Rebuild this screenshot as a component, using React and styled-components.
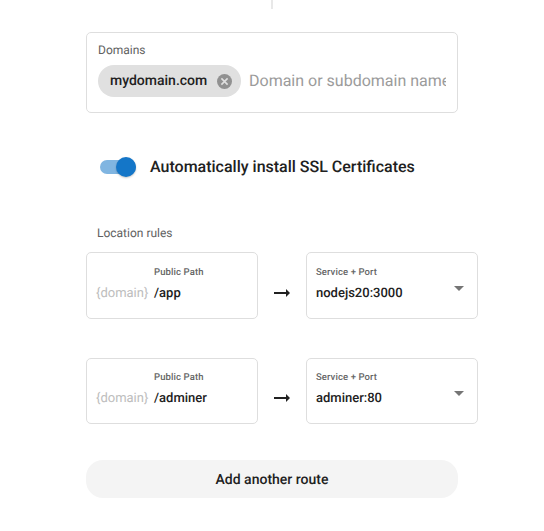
import React from "react";
import styled, { createGlobalStyle } from "styled-components";

const GlobalStyle = createGlobalStyle`
  * { box-sizing: border-box; }
  body {
    margin: 0;
    background: #fff;
    color: #212121;
    font-family: Roboto, "Liberation Sans", sans-serif;
    text-rendering: geometricPrecision;
  }
`;

const Page = styled.main`
  width: 544px;
  height: 531px;
  padding-left: 86px;
  overflow: hidden;
  display: flex;
  flex-direction: column;
  align-items: flex-start;
`;

const Connector = styled.div`
  width: 2px;
  height: 9px;
  margin: 0 0 23px 185px;
  background: #e8e8e8;
`;

const Outlined = styled.section`
  border: 1px solid #dedede;
  border-radius: 5px;
  background: #fff;
`;

const DomainsField = styled(Outlined)`
  width: 372px;
  height: 81px;
  padding: 9px 11px 0;
`;

const Label = styled.div`
  color: #616161;
  font-size: 12px;
  line-height: 16px;
`;

const ChipRow = styled.div`
  display: flex;
  align-items: center;
  gap: 8px;
  margin-top: 7px;
`;

const Chip = styled.div`
  flex: none;
  display: flex;
  align-items: center;
  justify-content: space-between;
  width: 143px;
  height: 32px;
  padding: 0 9px 0 12px;
  border-radius: 16px;
  background: #e0e0e0;
  font-size: 14px;
  font-weight: 500;
  line-height: 30px;
`;

const DomainInput = styled.input`
  flex: 1;
  min-width: 0;
  height: 32px;
  padding: 0;
  border: 0;
  outline: 0;
  background: none;
  font: 400 16px/32px Roboto, "Liberation Sans", sans-serif;
  text-rendering: geometricPrecision;
  &::placeholder {
    color: #9b9b9b;
    opacity: 1;
  }
`;

const SwitchRow = styled.label`
  display: flex;
  align-items: center;
  gap: 14px;
  height: 24px;
  margin: 42px 0 0 14px;
  font-size: 16px;
  font-weight: 500;
  line-height: 24px;
`;

const Track = styled.span`
  display: flex;
  align-items: center;
  justify-content: flex-end;
  width: 36px;
  height: 14px;
  border-radius: 7px;
  background: #80b5e1;
`;

const Thumb = styled.span`
  flex: none;
  width: 20px;
  height: 20px;
  border-radius: 50%;
  background: #1476c8;
  box-shadow: 0 1px 2px rgba(0, 0, 0, 0.22);
`;

const RulesHeading = styled.div`
  margin: 46px 0 11px 11px;
`;

const Rule = styled.div`
  display: flex;
  align-items: center;
  margin-bottom: ${(p) => p.$after};
`;

const RuleBox = styled(Outlined)`
  display: flex;
  width: 172px;
  height: ${(p) => p.$height};
  padding: ${(p) => p.$top} 9px 0;
`;

const Prefix = styled.span`
  width: 58px;
  padding-top: 18px;
  color: #bdbdbd;
  font-size: 13px;
  line-height: 20px;
`;

const Field = styled.div`
  flex: 1;
`;

const SmallLabel = styled.div`
  color: #666;
  font-size: 9.5px;
  font-weight: 500;
  line-height: 14px;
  letter-spacing: 0.1px;
`;

const Value = styled.div`
  margin-top: 4px;
  font-size: 13px;
  font-weight: 500;
  line-height: 20px;
`;

const ArrowIcon = styled.svg`
  flex: none;
  display: block;
  width: 16px;
  height: 8px;
  margin: ${(p) => p.$top} 16px 0;
`;

const Caret = styled.svg`
  flex: none;
  width: 10px;
  height: 5px;
  margin: 20px 4px 0 0;
`;

const AddButton = styled.button`
  width: 372px;
  height: 38px;
  padding: 2px 0 0;
  border: 0;
  border-radius: 17px;
  background: #f4f4f4;
  color: #212121;
  font: 500 14px/36px Roboto, "Liberation Sans", sans-serif;
  text-rendering: geometricPrecision;
`;

const rules = [
  { path: "/app", service: "nodejs20:3000", height: "67px", top: "13px", arrow: "15px", after: "39px" },
  { path: "/adminer", service: "adminer:80", height: "66px", top: "12px", arrow: "14px", after: "36px" },
];

function RemoveIcon() {
  return (
    <svg width="15" height="15" viewBox="0 0 15 15">
      <circle cx="7.5" cy="7.5" r="7.5" fill="#919191" />
      <path d="M4.4 4.4l6.2 6.2M10.6 4.4l-6.2 6.2" stroke="#e0e0e0" strokeWidth="1.6" />
    </svg>
  );
}

function RouteRule({ rule }) {
  return (
    <Rule $after={rule.after}>
      <RuleBox $height={rule.height} $top={rule.top}>
        <Prefix>{"{domain}"}</Prefix>
        <Field>
          <SmallLabel>Public Path</SmallLabel>
          <Value>{rule.path}</Value>
        </Field>
      </RuleBox>
      <ArrowIcon $top={rule.arrow} viewBox="0 0 16 8">
        <path d="M0 3h12V0l4 4-4 4V5H0z" fill="#212121" />
      </ArrowIcon>
      <RuleBox $height={rule.height} $top={rule.top}>
        <Field>
          <SmallLabel>Service + Port</SmallLabel>
          <Value>{rule.service}</Value>
        </Field>
        <Caret viewBox="0 0 10 5">
          <path d="M0 0h10L5 5z" fill="#757575" />
        </Caret>
      </RuleBox>
    </Rule>
  );
}

export default function App() {
  return (
    <>
      <GlobalStyle />
      <Page>
        <Connector />
        <DomainsField>
          <Label>Domains</Label>
          <ChipRow>
            <Chip>
              mydomain.com
              <RemoveIcon />
            </Chip>
            <DomainInput placeholder="Domain or subdomain name" />
          </ChipRow>
        </DomainsField>
        <SwitchRow>
          <Track>
            <Thumb />
          </Track>
          Automatically install SSL Certificates
        </SwitchRow>
        <RulesHeading>
          <Label>Location rules</Label>
        </RulesHeading>
        {rules.map((rule) => (
          <RouteRule key={rule.path} rule={rule} />
        ))}
        <AddButton>Add another route</AddButton>
      </Page>
    </>
  );
}
